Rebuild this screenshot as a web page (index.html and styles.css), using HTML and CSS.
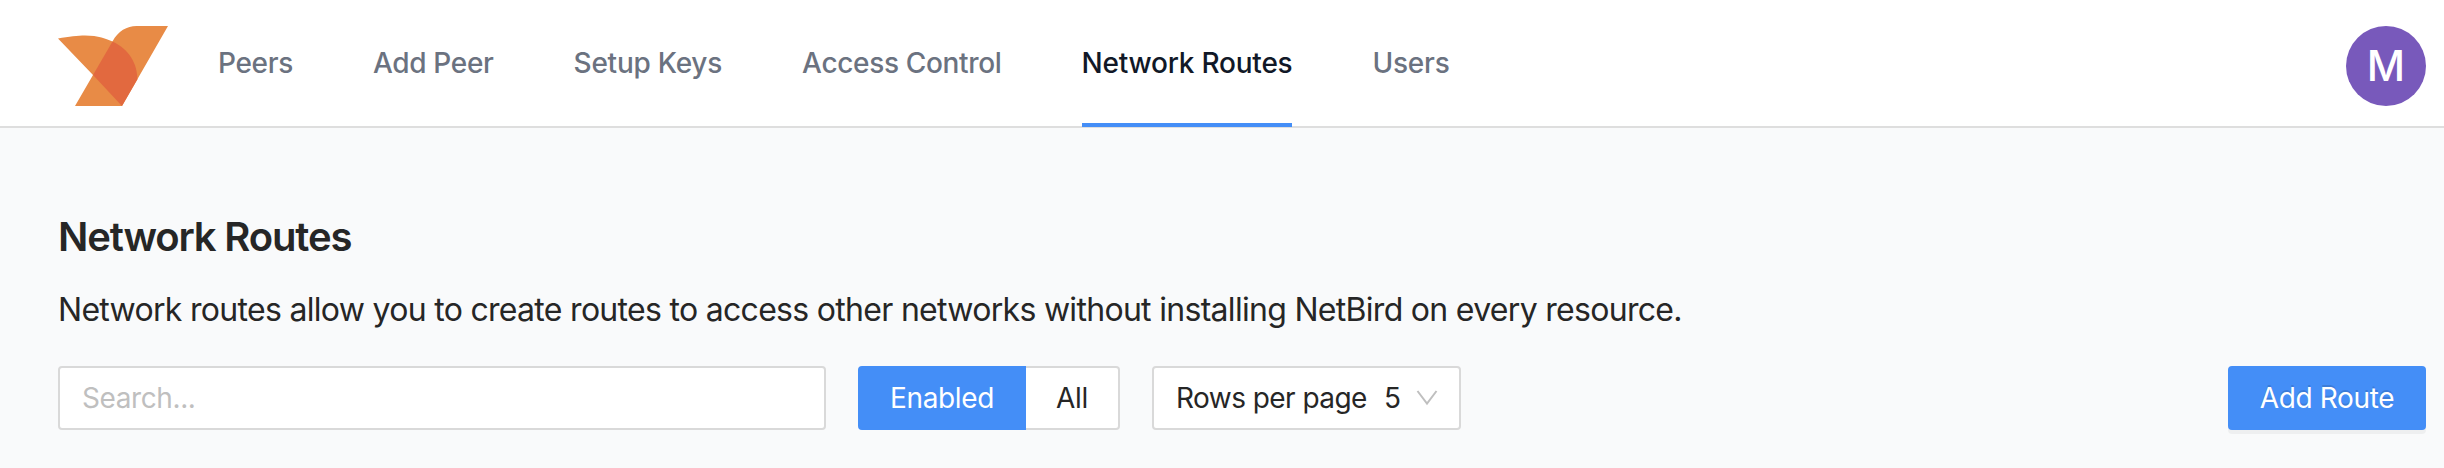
FILE: index.html
```html
<!DOCTYPE html>
<html lang="en">
<head>
<meta charset="utf-8">
<title>Network Routes</title>
<link rel="stylesheet" href="styles.css">
</head>
<body>
<header class="navbar">
  <svg class="logo" width="110" height="80" viewBox="0 0 110 80" aria-hidden="true">
    <path fill="#e88b46" d="M0 12.500C32 6 45 11 54.500 15.500C60 5 69 0 78.500 0H110L64 80H17L35 49Z"/>
    <path fill="#e2693f" d="M54.500 15.500C71 23 79.500 38 79.300 53.500L64 80L35 49Z"/>
  </svg>
  <nav class="menu">
    <a class="item peers">Peers</a>
    <a class="item add-peer">Add Peer</a>
    <a class="item keys">Setup Keys</a>
    <a class="item access">Access Control</a>
    <a class="item routes active">Network Routes</a>
    <a class="item users">Users</a>
  </nav>
  <div class="avatar">M</div>
</header>
<main class="content">
  <h1 class="title">Network Routes</h1>
  <p class="description">Network routes allow you to create routes to access other networks without installing NetBird on every resource.</p>
  <div class="toolbar">
    <div class="search">Search...</div>
    <div class="toggle">
      <div class="option enabled">Enabled</div>
      <div class="option all">All</div>
    </div>
    <div class="select">
      <span class="select-label">Rows per page</span>
      <span class="select-value">5</span>
      <svg class="chevron" width="22" height="16" viewBox="0 0 22 16" aria-hidden="true"><path d="M1.500 1L11 13.500L20.500 1" fill="none" stroke="#bfbfbf" stroke-width="2"/></svg>
    </div>
    <div class="add-route">Add Route</div>
  </div>
</main>
</body>
</html>
```
FILE: styles.css
```css
* { box-sizing: border-box; }
body {
  margin: 0;
  height: 468px;
  overflow: hidden;
  background: #f9fafb;
  color: #262626;
  font: 28px/44px Inter, "Liberation Sans", sans-serif;
}
.navbar {
  display: flex;
  height: 128px;
  padding: 0 18px 0 58px;
  background: #fff;
  border-bottom: 2px solid #dedede;
}
.logo { margin-top: 26px; }
.menu { display: flex; gap: 80px; margin-left: 50px; }
.item {
  height: 127px;
  padding-top: 41px;
  color: #6b7280;
  font-weight: 500;
  letter-spacing: -.33px;
  white-space: nowrap;
}
.keys { letter-spacing: -.24px; }
.routes, .users { letter-spacing: -.22px; }
.active { color: #111827; border-bottom: 4px solid #448ef7; }
.avatar {
  display: flex;
  align-items: center;
  justify-content: center;
  width: 80px;
  height: 80px;
  margin: 26px 0 0 auto;
  border-radius: 50%;
  background: #7859bb;
  color: #fff;
  font-size: 42px;
  font-weight: 500;
}
.content { padding: 81px 18px 0 58px; }
.title { margin: 0; font-size: 40px; line-height: 56px; font-weight: 600; letter-spacing: -1.15px; }
.description { margin: 21px 0 0; font-size: 32px; line-height: 48px; letter-spacing: -.7px; white-space: nowrap; }
.toolbar { display: flex; margin-top: 32px; }
.search, .option, .select, .add-route {
  height: 64px;
  padding-top: 8px;
  border: 2px solid #d9d9d9;
  border-radius: 4px;
  background: #fff;
  white-space: nowrap;
}
.search { width: 768px; padding-left: 22px; color: #bfbfbf; letter-spacing: -.4px; }
.toggle { display: flex; margin-left: 32px; }
.option { text-align: center; letter-spacing: -.35px; }
.enabled { width: 168px; border-color: #448ef7; border-radius: 4px 0 0 4px; background: #448ef7; color: #fff; }
.all { width: 94px; border-left: 0; border-radius: 0 4px 4px 0; }
.select { display: flex; width: 309px; margin-left: 32px; padding-left: 22px; }
.select-label { width: 192px; letter-spacing: -.55px; }
.select-value { width: 17px; margin-left: 16px; }
.chevron { margin: 14px 0 0 15px; }
.add-route {
  width: 198px;
  margin-left: auto;
  border-color: #448ef7;
  background: #448ef7;
  color: #fff;
  letter-spacing: -.35px;
  text-align: center;
  text-shadow: 0 -2px 0 rgba(0, 0, 0, .12);
  box-shadow: 0 4px 0 rgba(0, 0, 0, .045);
}
```
